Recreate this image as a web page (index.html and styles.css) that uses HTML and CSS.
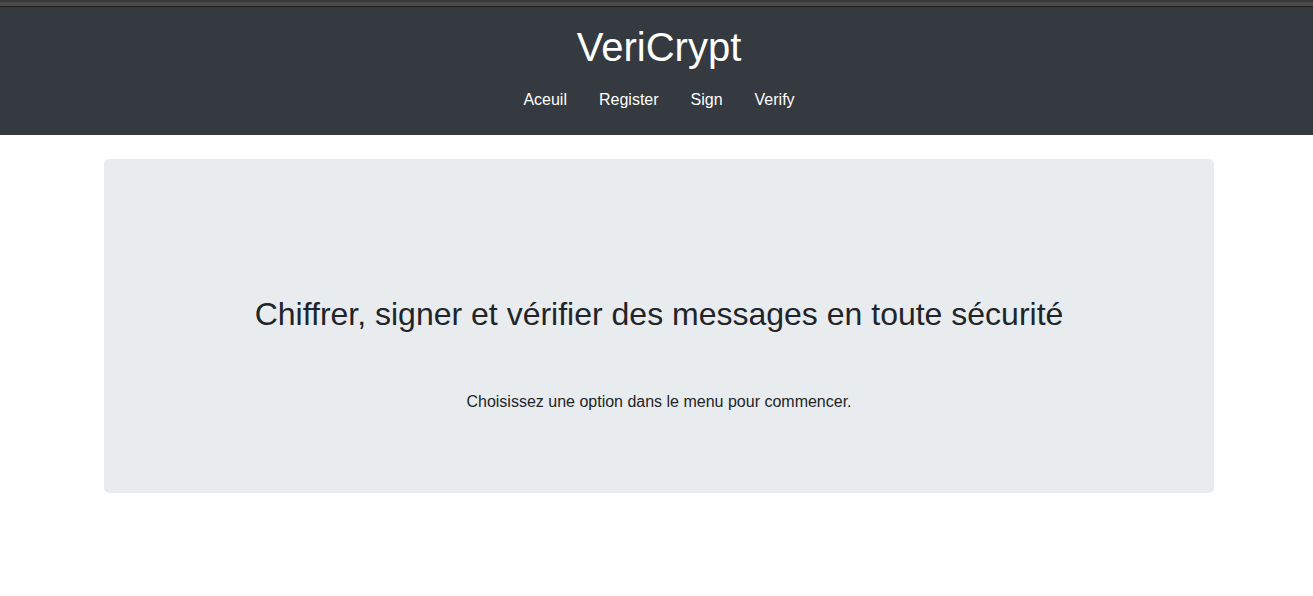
FILE: index.html
```html
<!DOCTYPE html>
<html lang="fr">
<head>
<meta charset="utf-8">
<meta name="viewport" content="width=device-width, initial-scale=1">
<title>VeriCrypt</title>
<link rel="stylesheet" href="styles.css">
</head>
<body>
<div class="top-strip"></div>
<header class="header">
  <h1 class="brand">VeriCrypt</h1>
  <nav class="nav">
    <a class="nav-link" href="#">Aceuil</a>
    <a class="nav-link" href="#">Register</a>
    <a class="nav-link" href="#">Sign</a>
    <a class="nav-link" href="#">Verify</a>
  </nav>
</header>
<main class="container">
  <section class="jumbotron">
    <h2 class="title">Chiffrer, signer et vérifier des messages en toute sécurité</h2>
    <p class="lead">Choisissez une option dans le menu pour commencer.</p>
  </section>
</main>
</body>
</html>
```
FILE: styles.css
```css
* {
  box-sizing: border-box;
}

body {
  margin: 0;
  background: #fff;
  color: #212529;
  font-family: "Liberation Sans", Arial, sans-serif;
  font-size: 16px;
  line-height: 26px;
}

.top-strip {
  height: 7px;
  background: #4b4b4b;
  border-top: 2px solid #383838;
  border-bottom: 1px solid #1c1c1c;
}

.header {
  padding: 16px 0 14px 5px;
  background: #343a40;
  color: #fff;
  text-align: center;
}

.brand {
  margin: 0 0 8px;
  font-size: 40px;
  font-weight: 400;
  line-height: 48px;
}

.nav {
  display: flex;
  flex-wrap: wrap;
  justify-content: center;
}

.nav-link {
  padding: 8px 16px;
  color: #fff;
  text-decoration: none;
}

.container {
  max-width: 1145px;
  margin: 24px auto 0;
  padding: 0 15px 0 20px;
}

.jumbotron {
  padding: 136px 32px 78px;
  border-radius: 5px;
  background: #e9ecef;
  text-align: center;
}

.title {
  margin: 0 0 56px;
  font-size: 32px;
  font-weight: 400;
  line-height: 38px;
}

.lead {
  margin: 0;
}
```
